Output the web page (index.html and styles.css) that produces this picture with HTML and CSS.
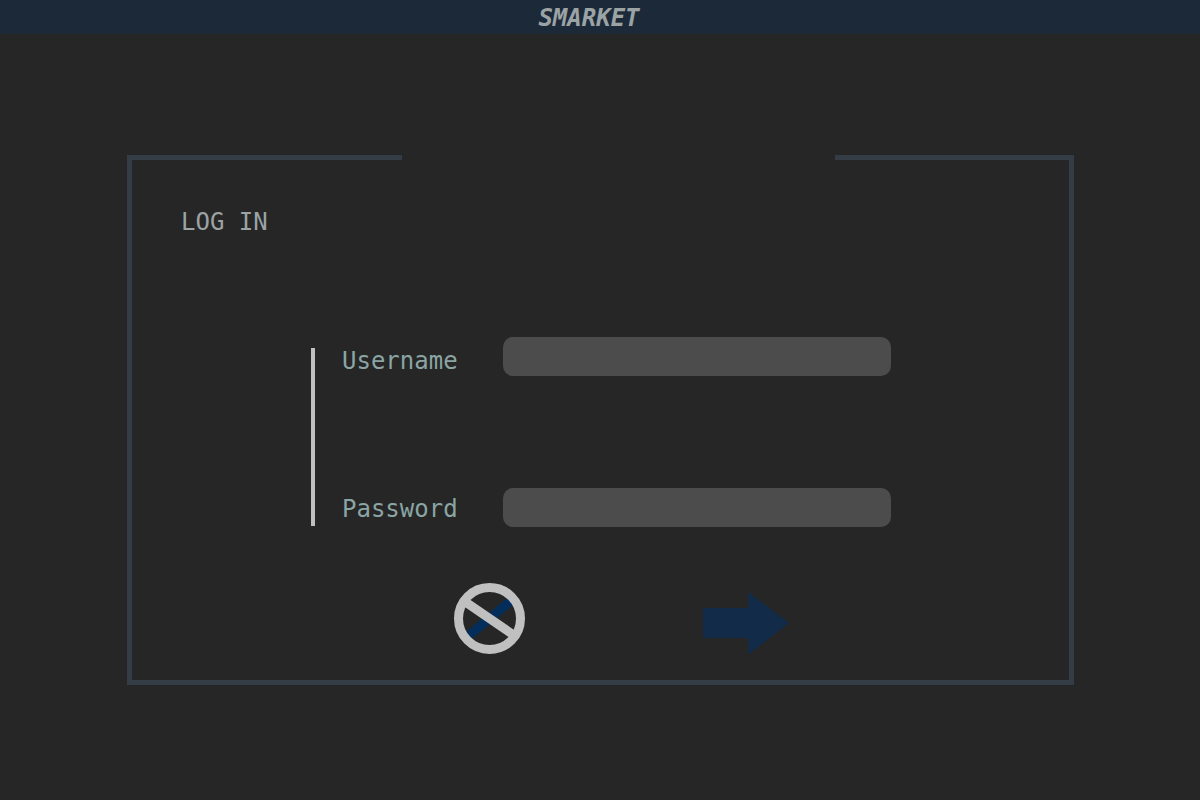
FILE: index.html
```html
<!DOCTYPE html>
<html lang="en">
<head>
<meta charset="utf-8">
<title>Smarket</title>
<link rel="stylesheet" href="styles.css">
</head>
<body>
<header class="topbar"><h1 class="brand">SMARKET</h1></header>
<main class="page">
  <form class="panel">
    <div class="panel-top"><span class="edge edge-left"></span><span class="edge edge-right"></span></div>
    <h2 class="title">LOG IN</h2>
    <div class="fields">
      <div class="labels">
        <label for="username">Username</label>
        <label for="password">Password</label>
      </div>
      <div class="inputs">
        <input class="field" id="username" type="text">
        <input class="field" id="password" type="password">
      </div>
    </div>
    <div class="actions">
      <button class="action" type="reset" aria-label="Cancel">
        <svg width="71" height="71" viewBox="0 0 71 71">
          <path d="M13 54 58 17" stroke="#032d5b" stroke-width="9"/>
          <circle cx="35.5" cy="35.5" r="31" fill="none" stroke="#c0c0c0" stroke-width="9"/>
          <path d="M10 18 61 53" stroke="#c0c0c0" stroke-width="9"/>
        </svg>
      </button>
      <button class="action action-go" type="submit" aria-label="Log in">
        <svg width="86" height="64" viewBox="0 0 86 64"><path d="M0 16H45V0L86 31 45 63V46H0Z" fill="#122b49"/></svg>
      </button>
    </div>
  </form>
</main>
</body>
</html>
```
FILE: styles.css
```css
* {
  box-sizing: border-box;
}

body {
  margin: 0;
  min-height: 100vh;
  background: #262626;
  color: #9ba3a5;
  font: 24px/28px "DejaVu Sans Mono", monospace;
}

.topbar {
  padding: 4px 22px 2px 0;
  background: #1c2938;
  text-align: center;
}

.brand,
.title {
  margin: 0;
  font-size: 24px;
  line-height: 28px;
}

.brand {
  font-style: italic;
}

.page {
  padding: 121px 126px 40px 127px;
}

.panel {
  border: 5px solid #343c46;
  border-top: 0;
  padding-bottom: 24px;
}

.panel-top {
  display: flex;
  justify-content: space-between;
}

.edge {
  height: 5px;
  background: #343c46;
}

.edge-left {
  width: 270px;
}

.edge-right {
  width: 234px;
}

.title {
  padding: 48px 0 0 49px;
  font-weight: normal;
}

.fields {
  display: flex;
  gap: 45px;
  margin: 101px 178px 0 179px;
}

.labels {
  display: flex;
  flex-direction: column;
  justify-content: space-between;
  margin-top: 11px;
  height: 178px;
  padding: 0 0 4px 27px;
  border-left: 4px solid #c0c0c0;
  color: #8aa5a3;
  line-height: 26px;
}

.inputs {
  display: flex;
  flex: 1;
  flex-direction: column;
  gap: 112px;
}

.field {
  width: 100%;
  height: 39px;
  padding: 4px 12px;
  border: 0;
  border-radius: 10px;
  background: #4c4c4c;
  color: #c0c0c0;
  font: inherit;
}

.action {
  display: block;
  padding: 0;
  border: 0;
  background: none;
  cursor: pointer;
}

.action svg {
  display: block;
}

.actions {
  display: flex;
  align-items: flex-start;
  gap: 178px;
  margin: 56px 0 0 322px;
}

.action-go {
  padding-top: 9px;
}
```
